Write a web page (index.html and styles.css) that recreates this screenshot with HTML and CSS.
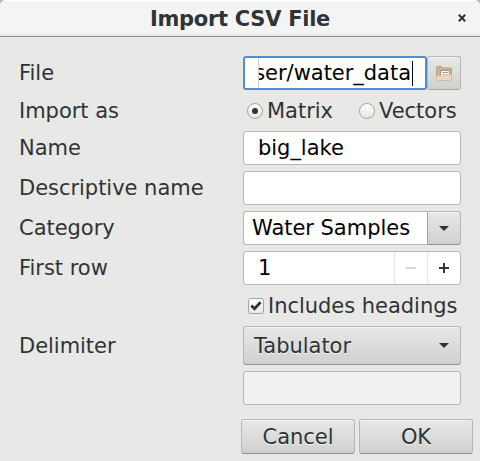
FILE: index.html
```html
<!DOCTYPE html>
<html lang="en">
<head>
<meta charset="utf-8">
<title>Import CSV File</title>
<link rel="stylesheet" href="styles.css">
</head>
<body>
<div class="dialog">
  <header class="titlebar">
    <h1>Import CSV File</h1>
    <svg class="close" width="8" height="8" viewBox="0 0 8 8"><path d="M.8.8l6.4 6.4M7.2.8L.8 7.2"/></svg>
  </header>
  <main class="form">
    <span class="label">File</span>
    <div class="file">
      <div class="entry focused"><div class="clip"><span>ser/water_data</span></div><i class="caret"></i></div>
      <div class="button browse">
        <svg width="16" height="16" viewBox="0 0 16 16">
          <path d="M.5 14V2.500q0-1 1-1h4l1 1.500h9v11z" fill="#c9b591" stroke="#b7a584"/>
          <path d="M4.500 5.500h9v6h-9z" fill="#fff" stroke="#8f948c"/>
          <path d="M6 7.500h6" stroke="#9aa09a"/>
          <path d="M.5 14.500v-3q0-1 1-1h3.500l2-1h8.500v5q0 1-1 1h-13q-1 0-1-1z" fill="#ead8bd" stroke="#d2bd9b"/>
        </svg>
      </div>
    </div>
    <span class="label">Import as</span>
    <div class="radios">
      <div class="option first"><i class="radio on"></i><span>Matrix</span></div>
      <div class="option"><i class="radio"></i><span>Vectors</span></div>
    </div>
    <span class="label">Name</span>
    <div class="entry">big_lake</div>
    <span class="label">Descriptive name</span>
    <div class="entry"></div>
    <span class="label">Category</span>
    <div class="combo">
      <div class="entry joined">Water Samples</div>
      <div class="button drop"><svg width="10" height="5" viewBox="0 0 10 5"><path class="arrow" d="M0 0h10L5 5z"/></svg></div>
    </div>
    <span class="label">First row</span>
    <div class="entry spin">
      <span class="value">1</span>
      <div class="step"><svg width="10" height="10" viewBox="0 0 10 10"><path d="M0 5h10" stroke="#d5d6d5" stroke-width="2"/></svg></div>
      <div class="step"><svg width="10" height="10" viewBox="0 0 10 10"><path d="M0 5h10M5 0v10" stroke="#2e3436" stroke-width="2"/></svg></div>
    </div>
    <span class="label"></span>
    <div class="check">
      <i class="box"><svg width="12" height="10" viewBox="0 0 12 10"><path d="M1.300 4.500L4.500 7.800L10.600 1.300" fill="none" stroke="#2e3436" stroke-width="2.800"/></svg></i>
      <span>Includes headings</span>
    </div>
    <span class="label">Delimiter</span>
    <div class="button select"><span>Tabulator</span><svg width="10" height="5" viewBox="0 0 10 5"><path class="arrow" d="M0 0h10L5 5z"/></svg></div>
    <span class="label"></span>
    <div class="entry disabled"></div>
  </main>
  <footer class="actions">
    <div class="button">Cancel</div>
    <div class="button">OK</div>
  </footer>
</div>
</body>
</html>
```
FILE: styles.css
```css
* { box-sizing: border-box; }
body {
  margin: 0;
  background: #b8b8b8;
  color: #2e3436;
  font: 21px/26px "DejaVu Sans", sans-serif;
  letter-spacing: -.03px;
  white-space: nowrap;
}
svg { display: block; flex: none; }
.dialog {
  width: 480px;
  height: 461px;
  overflow: hidden;
  border-radius: 6px 6px 0 0;
  background: #e8e8e6;
}
.titlebar {
  display: grid;
  grid-template-columns: 1fr auto 1fr;
  align-items: center;
  height: 37px;
  border-bottom: 1px solid #8e908b;
  box-shadow: inset 0 1px #fff, inset 0 -2px #e8e8e7;
  background: #f4f4f4;
}
.titlebar h1 {
  grid-column: 2;
  margin: 0;
  padding-top: 2px;
  font-size: 21px;
  line-height: 26px;
  letter-spacing: -.28px;
}
.close { justify-self: end; margin-right: 14px; stroke: #2e3436; stroke-width: 2; }
.form {
  display: grid;
  grid-template-columns: 224px 218px;
  grid-template-rows: 34px 29px 34px 34px 34px 34px 29px 39px 34px;
  row-gap: 6px;
  padding: 19px 19px 0;
}
.label { display: flex; align-items: center; }
.entry {
  display: flex;
  align-items: center;
  height: 34px;
  padding-left: 14px;
  border: 1px solid #b6b6b3;
  border-radius: 3px;
  background: #fff;
  color: #000;
}
.file, .combo { display: flex; }
.focused {
  width: 184px;
  border: 2px solid #4a90d9;
  padding-left: 13px;
}
.clip {
  display: flex;
  justify-content: flex-end;
  width: 154px;
  height: 30px;
  padding-right: 1px;
  line-height: 30px;
  overflow: hidden;
  border-left: 1px solid #ccc;
}
.caret { width: 1px; height: 25px; background: #000; }
.button {
  display: flex;
  align-items: center;
  justify-content: center;
  border: 1px solid #b6b6b3;
  border-bottom-color: #8e908b;
  border-radius: 3px;
  box-shadow: inset 0 1px #f5f5f4;
  background: linear-gradient(#e8e8e6, #d0d0ce);
  text-shadow: 0 1px rgba(255, 255, 255, .7);
}
.browse { width: 34px; border-bottom-color: #a6a6a3; }
.radios { display: flex; align-items: center; padding-left: 4px; }
.option { display: flex; align-items: center; gap: 4px; }
.first { width: 112px; }
.radio {
  display: flex;
  align-items: center;
  justify-content: center;
  width: 16px;
  height: 16px;
  border: 1px solid #a2a29f;
  border-radius: 50%;
  background: linear-gradient(#fff, #e5e5e3);
}
.on::after { content: ""; width: 6px; height: 6px; border-radius: 50%; background: #2e3436; }
.joined { width: 184px; padding-left: 8px; border-right: 0; border-radius: 3px 0 0 3px; }
.drop { width: 34px; border-radius: 0 3px 3px 0; border-left-color: #a2a29f; }
.arrow { fill: #2e3436; }
.value { flex: 1; }
.step {
  display: flex;
  align-items: center;
  justify-content: center;
  width: 33px;
  height: 32px;
  border-left: 1px solid #e5e5e5;
}
.check { display: flex; align-items: center; gap: 4px; padding-left: 5px; }
.box {
  display: flex;
  align-items: center;
  justify-content: center;
  width: 16px;
  height: 16px;
  border: 1px solid #a2a29f;
  border-radius: 3px;
  background: linear-gradient(#fff, #e9e9e7);
}
.select { justify-content: space-between; padding: 0 11px 0 10px; }
.disabled { background: #f1f1f1; }
.actions { display: flex; justify-content: flex-end; gap: 4px; margin-top: 14px; padding-right: 7px; }
.actions .button { width: 114px; height: 35px; }
```
